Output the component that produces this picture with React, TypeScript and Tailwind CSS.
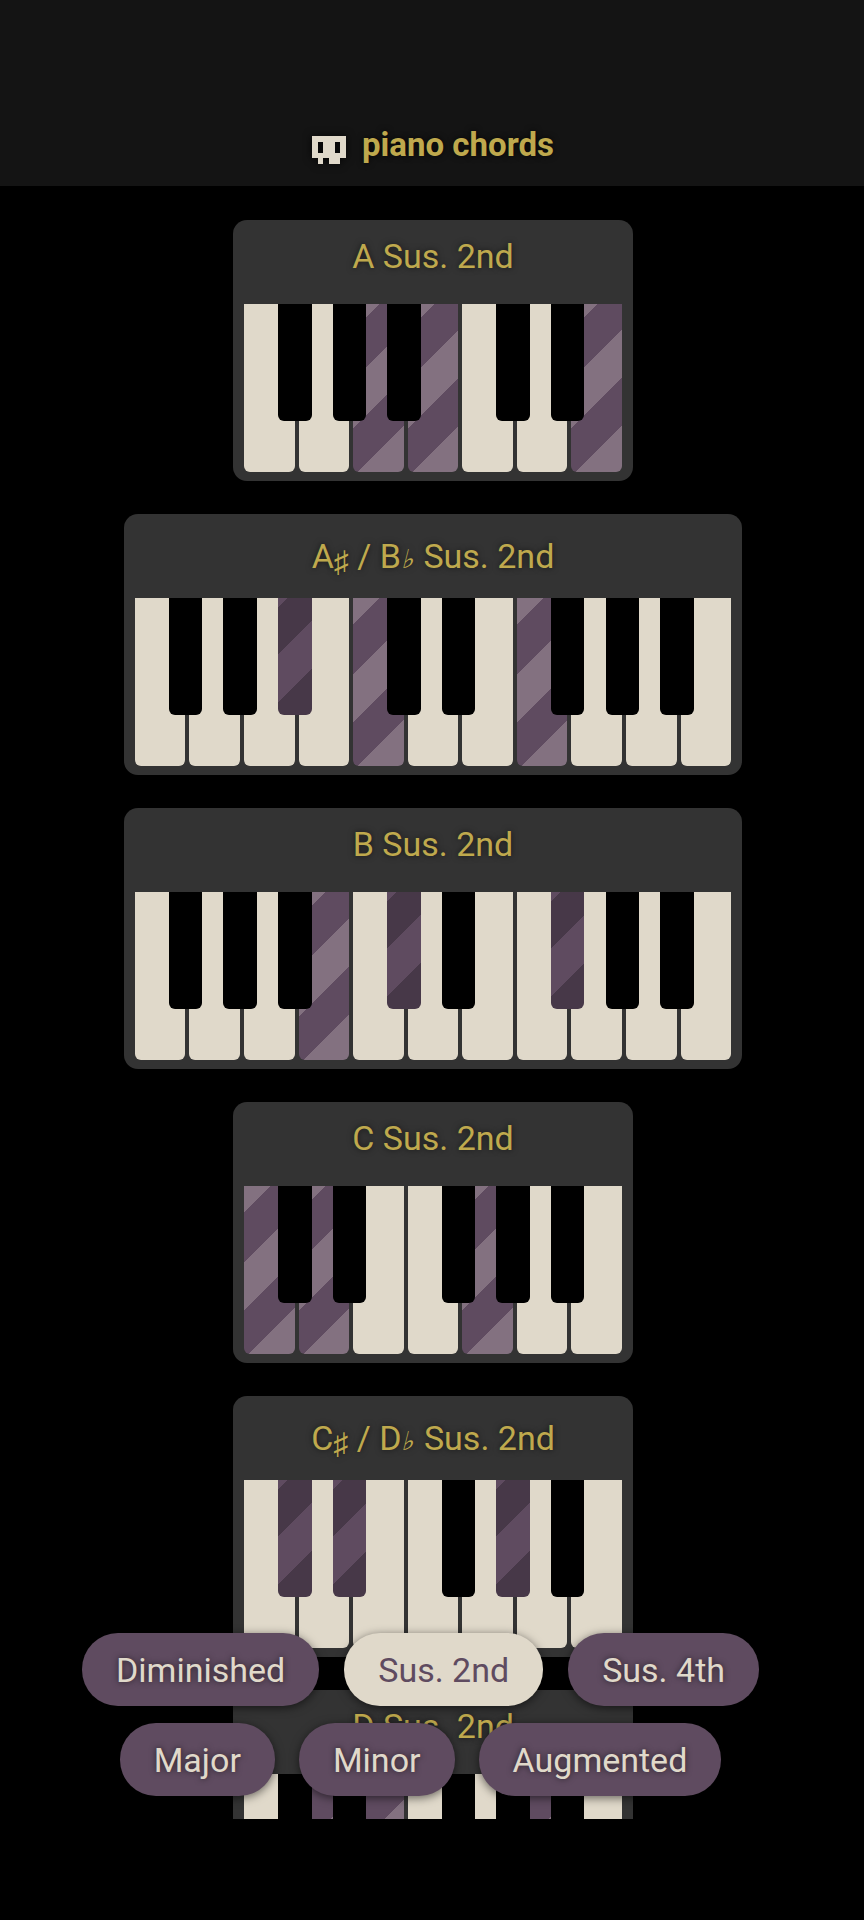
import type { ReactNode } from "react"

type Chord = { name: string; title: ReactNode; keys: number; black: number[]; on: number[]; onBlack: number[]; accidental?: boolean }

const white = "bg-[#e0d9ca]"
const whiteOn = "bg-[linear-gradient(135deg,#837180_19px,#5f4b60_19px,#5f4b60_54px,#837180_54px,#837180_88px,#5f4b60_88px,#5f4b60_122px,#837180_122px)]"
const blackOn = "bg-[linear-gradient(135deg,#5f4b60_6.5px,#473848_6.5px,#473848_40px,#5f4b60_40px,#5f4b60_74px,#473848_74px)]"

const FROM_F = [0, 1, 2, 4, 5, 7, 8, 9]
const FROM_C = [0, 1, 3, 4, 5]

function Sharp() {
  return <span className="relative top-[4px] text-[30px] leading-none">♯</span>
}

function Flat() {
  return <span className="mr-[2px] text-[26px] leading-none italic">♭</span>
}

const chords: Chord[] = [
  { name: "a", title: "A Sus. 2nd", keys: 7, black: [0, 1, 2, 4, 5], on: [2, 3, 6], onBlack: [] },
  {
    name: "as",
    title: (
      <>
        A<Sharp />&nbsp;/ B<Flat /> Sus. 2nd
      </>
    ),
    keys: 11,
    black: FROM_F,
    on: [4, 7],
    onBlack: [2],
    accidental: true,
  },
  { name: "b", title: "B Sus. 2nd", keys: 11, black: FROM_F, on: [3], onBlack: [4, 7] },
  { name: "c", title: "C Sus. 2nd", keys: 7, black: FROM_C, on: [0, 1, 4], onBlack: [] },
  {
    name: "cs",
    title: (
      <>
        C<Sharp />&nbsp;/ D<Flat /> Sus. 2nd
      </>
    ),
    keys: 7,
    black: FROM_C,
    on: [],
    onBlack: [0, 1, 4],
    accidental: true,
  },
  { name: "d", title: "D Sus. 2nd", keys: 7, black: FROM_C, on: [1, 2, 5], onBlack: [] },
]

const topRow = ["Diminished", "Sus. 2nd", "Sus. 4th"]
const bottomRow = ["Major", "Minor", "Augmented"]

function Skull() {
  return (
    <svg viewBox="0 0 6 5" className="w-[34px] h-[28px] mb-[1px] drop-shadow-[0_0_4px_rgba(0,0,0,0.8)]" shapeRendering="crispEdges">
      <path
        fill="#e0d9ca"
        fillRule="evenodd"
        d="M0 0h6v4H5v1H3V4H2v1H1V4H0z M1 1v2h1V1z M4 1v2h1V1z"
      />
    </svg>
  )
}

function Keyboard({ chord }: { chord: Chord }) {
  return (
    <div className="flex gap-[4px]">
      {Array.from({ length: chord.keys }).map((_, i) => (
        <div
          key={i}
          className={`relative w-[50.6px] h-[168px] rounded-b-[6px] ${chord.on.includes(i) ? whiteOn : white}`}
        >
          {chord.black.includes(i) && (
            <div
              className={`absolute z-10 top-0 left-[calc(100%-16.5px)] w-[33.5px] h-[117px] rounded-b-[6px] ${
                chord.onBlack.includes(i) ? blackOn : "bg-black"
              }`}
            />
          )}
        </div>
      ))}
    </div>
  )
}

function Pill({ label }: { label: string }) {
  const active = label === "Sus. 2nd"
  return (
    <button
      className={`h-[73px] pt-[1px] px-[34px] rounded-[36px] text-[34px] shadow-[0_2px_10px_rgba(0,0,0,0.55)] ${
        active
          ? "bg-[#e0d9ca] text-[#5f4b60]"
          : "bg-[#5f4b60] text-[#e0d9ca] [text-shadow:0_0_6px_rgba(0,0,0,0.6)]"
      }`}
    >
      {label}
    </button>
  )
}

export default function App() {
  return (
    <div className="relative w-[864px] h-[1920px] bg-black font-['Roboto','Noto_Sans',sans-serif] overflow-hidden">
      {/* header */}
      <header className="h-[186px] bg-[#141414] flex items-end justify-center gap-[16px] pb-[21px] pl-[2px]">
        <Skull />
        <h1 className="text-[33px] leading-[40px] font-bold text-[#bfa94d] [text-shadow:0_0_6px_rgba(0,0,0,0.8)]">
          piano chords
        </h1>
      </header>

      {/* chord list */}
      <main className="h-[1633px] overflow-hidden flex flex-col items-center gap-[33px] pt-[34px] pl-[2px]">
        {chords.map((chord) => (
          <section key={chord.name} className="shrink-0 bg-[#333333] rounded-[14px] px-[10.5px] pb-[9px]">
            <h2
              className={`h-[84px] flex items-center justify-center text-[34px] text-[#bfa94d] whitespace-pre [text-shadow:0_0_6px_rgba(0,0,0,0.6)] ${
                chord.accidental ? "" : "pb-[11px]"
              }`}
            >
              <span>{chord.title}</span>
            </h2>
            <Keyboard chord={chord} />
          </section>
        ))}
      </main>

      {/* type picker */}
      <nav className="absolute z-20 top-[1633px] left-0 w-full pr-[23px] flex flex-col items-center gap-[17px]">
        <div className="flex gap-[25px]">
          {topRow.map((label) => (
            <Pill key={label} label={label} />
          ))}
        </div>
        <div className="flex gap-[24px]">
          {bottomRow.map((label) => (
            <Pill key={label} label={label} />
          ))}
        </div>
      </nav>
    </div>
  )
}
